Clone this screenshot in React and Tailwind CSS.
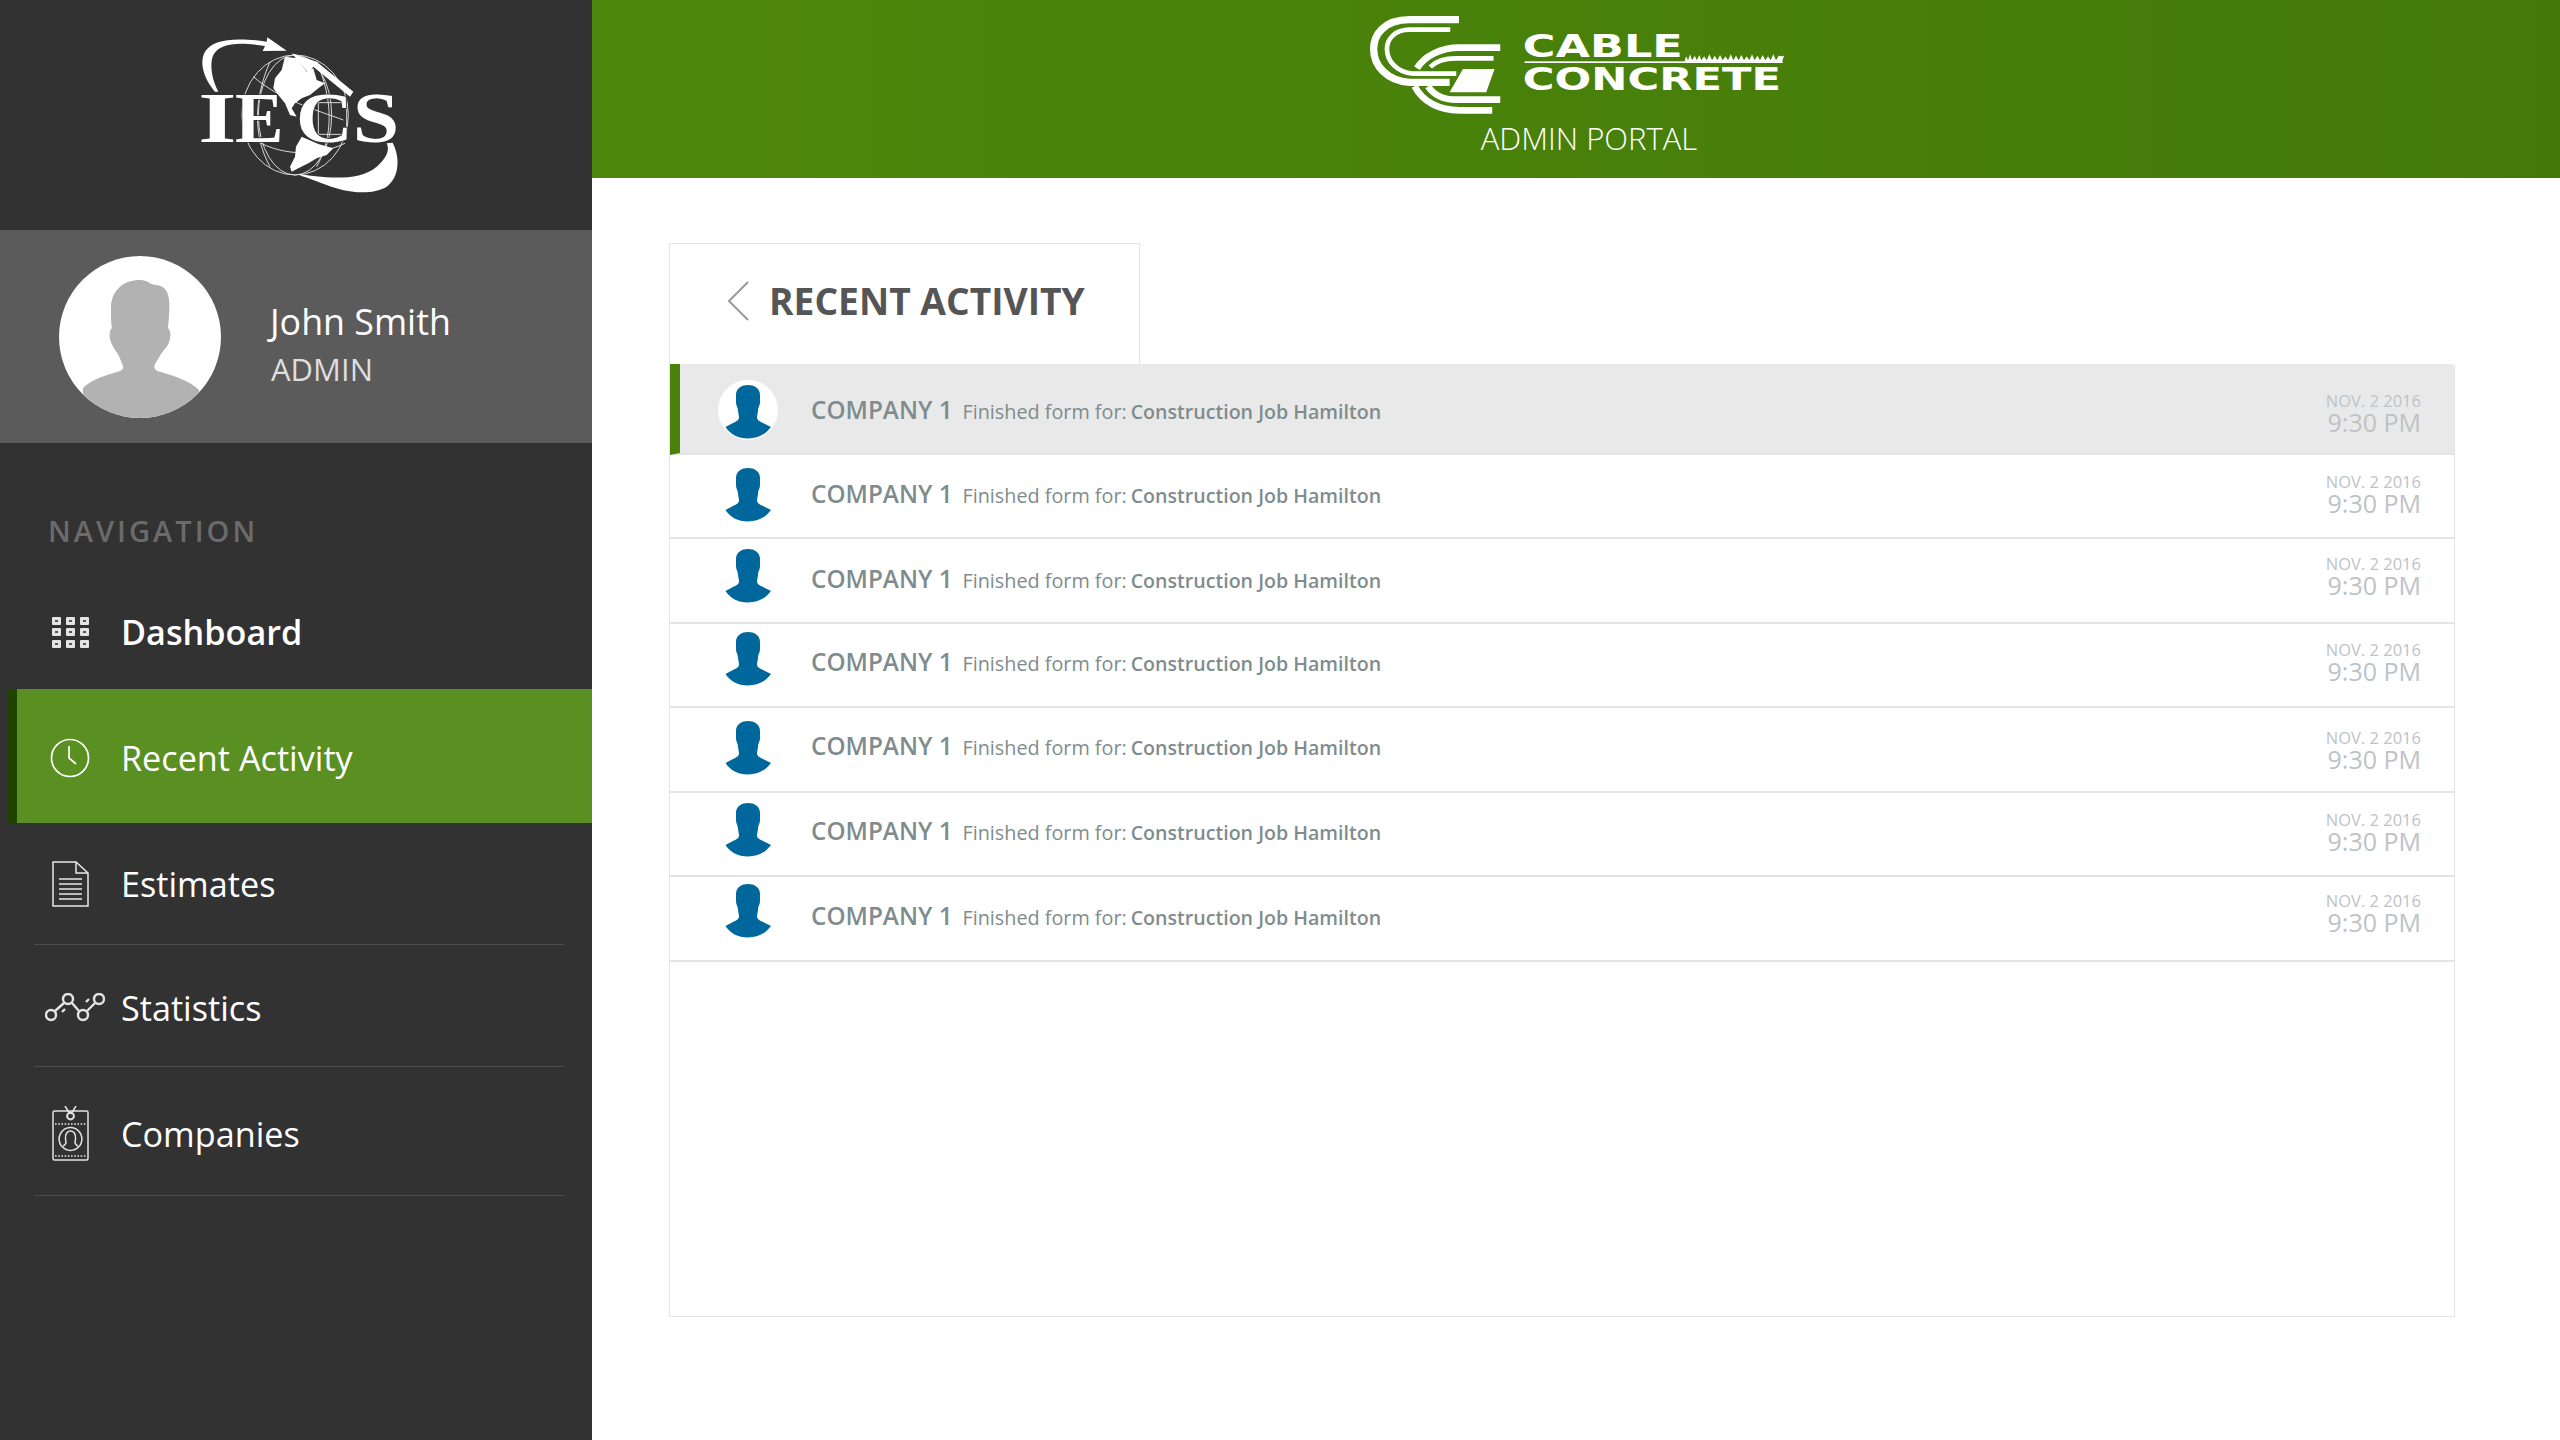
import { useState } from "react";

const logoLetter = {
    fill: "#ffffff",
    stroke: "#323232",
    strokeWidth: 5,
    paintOrder: "stroke",
    fontFamily: "'Liberation Serif', serif",
    fontWeight: 700,
    fontSize: 218,
};

function IecsLogo() {
    return (
        <svg viewBox="0 0 780 570" className="w-[260px] h-[190px] ml-[8px]">
            <g fill="none" stroke="#d8d8d8" strokeWidth="3">
                <ellipse cx="375" cy="285" rx="160" ry="180" />
                <ellipse cx="375" cy="285" rx="110" ry="180" />
                <path d="M250 170 C 330 240 440 270 520 300" />
                <path d="M225 340 C 300 400 420 420 525 370" />
                <path d="M300 125 C 250 240 250 350 300 440" />
                <path d="M440 125 C 490 240 490 350 440 440" />
                <rect x="445" y="248" width="85" height="95" />
            </g>
            <g fill="#ffffff">
                <path d="M345 110 L380 115 L410 155 L430 145 L440 180 L465 190 L445 205 L420 225 L395 235 L375 250 L365 265 L380 290 L360 285 L345 250 L325 225 L310 205 L315 175 L335 150 Z" />
                <path d="M395 350 L445 372 L490 385 L470 405 L440 415 L415 430 L385 445 L365 455 L360 440 L375 410 L378 380 Z" />
                <path d="M135 215 C105 180 85 130 105 95 C125 60 190 50 290 65 L292 52 L350 92 L278 93 L285 78 C200 65 150 70 130 105 C118 130 125 180 145 215 Z" />
                <path d="M380 462 C450 470 560 490 620 440 C650 415 660 390 650 370 L668 368 C690 410 690 470 650 500 C600 530 520 515 470 495 C430 480 400 470 380 462 Z" />
                <path d="M365 100 L440 125 L550 215 L540 230 L430 140 L415 160 Z" />
            </g>
            <text transform="translate(85 365) scale(1.35 1)" style={logoLetter}>I</text>
            <text transform="translate(195 365)" style={logoLetter}>E</text>
            <text transform="translate(378 365) scale(1.08 1)" style={logoLetter}>C</text>
            <text transform="translate(548 365) scale(1.15 1)" style={logoLetter}>S</text>
        </svg>
    );
}

function CableLogo() {
    return (
        <svg viewBox="0 0 1300 300" className="w-[433px] h-[100px] ml-[6px]">
            <g fill="none" stroke="#ffffff" transform="translate(-190 -48)">
                <path d="M478 62 H330 C250 62 222 110 222 150 C222 200 262 246 330 250 H450" strokeWidth="22" />
                <path d="M452 92 H330 C285 92 262 120 262 150 C262 185 290 220 340 224 H470" strokeWidth="14" />
                <path d="M602 146 H480 C425 146 375 170 352 208" strokeWidth="20" />
                <path d="M582 178 H470 C430 178 405 190 392 204" strokeWidth="14" />
                <path d="M345 262 C370 310 420 334 480 334 H578" strokeWidth="20" />
                <path d="M385 262 C405 290 430 302 470 302 H602" strokeWidth="20" />
            </g>
            <g transform="translate(-190 -48)">
                <path d="M490 210 H585 L560 280 H450 Z" fill="#ffffff" />
                <rect x="675" y="187" width="775" height="5" fill="#ffffff" />
                <path
                    d="M1155 188 L1160 172 L1166 184 L1172 166 L1178 184 L1186 170 L1192 184 L1200 168 L1206 184 L1214 172 L1222 184 L1230 166 L1238 184 L1246 170 L1254 184 L1262 168 L1270 184 L1278 172 L1286 184 L1294 166 L1302 184 L1310 170 L1318 184 L1326 168 L1334 184 L1342 172 L1350 184 L1358 166 L1366 184 L1374 170 L1382 184 L1390 168 L1398 184 L1406 172 L1414 184 L1422 166 L1430 184 L1438 170 L1446 172 L1454 170 L1448 188 Z"
                    fill="#ffffff"
                />
                <text x="670" y="175" fill="#ffffff" fontFamily="'DejaVu Sans', sans-serif" fontWeight="700" fontSize="96" textLength="480" lengthAdjust="spacingAndGlyphs">
                    CABLE
                </text>
                <text x="670" y="272" fill="#ffffff" fontFamily="'DejaVu Sans', sans-serif" fontWeight="700" fontSize="96" textLength="775" lengthAdjust="spacingAndGlyphs">
                    CONCRETE
                </text>
            </g>
        </svg>
    );
}

function DashboardIcon() {
    const cells = [0, 1, 2, 3, 4, 5, 6, 7, 8];
    return (
        <div className="grid grid-cols-3 gap-x-[5px] gap-y-[3.5px] w-[37px] ml-[7px]">
            {cells.map((cell) => (
                <div key={cell} className="h-[8px] w-[9px] rounded-[1px] bg-[#e4e4e4] flex items-center justify-center">
                    <div className="h-[2px] w-[3px] bg-[#555555]" />
                </div>
            ))}
        </div>
    );
}

function ClockIcon() {
    return (
        <svg viewBox="0 0 40 40" className="w-[40px] h-[40px] ml-[5px]" fill="none" stroke="#ffffff" strokeWidth="1.7">
            <circle cx="20" cy="20" r="18.5" />
            <path d="M19 8 V20 L26 26" />
        </svg>
    );
}

function DocIcon() {
    return (
        <svg viewBox="0 0 37 46" className="w-[37px] h-[46px] ml-[7px]" fill="none" stroke="#e8e8e8" strokeWidth="1.5">
            <path d="M1 1 H24 L36 12 V45 H1 Z" />
            <path d="M24 1 V12 H36" />
            <path d="M7 18 H30 M7 23 H30 M7 28 H30 M7 33 H30 M7 38 H30" />
        </svg>
    );
}

function StatsIcon() {
    return (
        <svg viewBox="0 0 60 30" className="w-[60px] h-[30px]" fill="none" stroke="#e4e4e4" strokeWidth="2.4">
            <circle cx="6" cy="22" r="5" />
            <circle cx="23" cy="6" r="5" />
            <circle cx="38" cy="22" r="5" />
            <circle cx="54" cy="6" r="5" />
            <path d="M10 18 L19 10 M27 10 L34 18 M42 18 L50 10" />
            <path d="M17 19 L20 16 M41 9 L44 6" />
        </svg>
    );
}

function BadgeIcon() {
    return (
        <svg viewBox="0 0 37 55" className="w-[37px] h-[55px] ml-[7px]" fill="none" stroke="#e4e4e4" strokeWidth="1.5">
            <rect x="1" y="5" width="35" height="49" rx="1.5" />
            <path d="M13 0 L18 8 M24 0 L19 8" />
            <circle cx="18.5" cy="10" r="3.4" strokeWidth="2" />
            <path d="M3 18 H34 M3 50 H34" strokeDasharray="1.6 1.6" />
            <circle cx="18.5" cy="33" r="11.4" />
            <path d="M11 40 C15 38 14 36 13.5 33 C13 27 16 25 18.5 25 C21 25 24 27 23.5 33 C23 36 22 38 26 40" />
        </svg>
    );
}

const navItems = [
    { label: "Dashboard", icon: <DashboardIcon />, rowClass: "h-[114px] font-semibold" },
    { label: "Recent Activity", icon: <ClockIcon />, active: true, rowClass: "h-[134px] pt-[3px]" },
    { label: "Estimates", icon: <DocIcon />, rowClass: "h-[122px] border-b border-[#4d4d4d]" },
    { label: "Statistics", icon: <StatsIcon />, rowClass: "h-[122px] pt-[5px] border-b border-[#4d4d4d]" },
    { label: "Companies", icon: <BadgeIcon />, rowClass: "h-[129px] pt-[5px] border-b border-[#4d4d4d]" },
];

function NavItem({ item }) {
    if (item.active) {
        return (
            <div className={`flex items-center ml-[7px] border-l-[10px] border-[#204400] bg-[#5a8f21] pl-[28px] text-white ${item.rowClass}`}>
                <div className="w-[60px] flex">{item.icon}</div>
                <span className="ml-[16px]">{item.label}</span>
            </div>
        );
    }
    return (
        <div className={`flex items-center ml-[34px] mr-[28px] pl-[11px] text-white ${item.rowClass}`}>
            <div className="w-[60px] flex">{item.icon}</div>
            <span className="ml-[16px]">{item.label}</span>
        </div>
    );
}

function Sidebar() {
    return (
        <aside className="w-[592px] shrink-0 min-h-[1440px] bg-[#323232]">
            <div className="h-[230px] flex items-center justify-center">
                <IecsLogo />
            </div>
            <div className="h-[213px] bg-[#5b5b5b] flex items-center pl-[59px]">
                <div className="w-[162px] h-[162px] rounded-full bg-white overflow-hidden">
                    <svg viewBox="0 0 162 162" className="w-full h-full">
                        <path
                            d="M81 24 C65 24 52 34 52 52 C52 62 52 68 53 72 C50 74 50 82 52 86 C54 92 58 96 60 100 L64 110 C65 113 62 115 58 116 C44 120 32 124 24 132 L24 170 L140 170 L140 134 C130 124 114 120 102 116 C97 115 94 113 96 108 L102 98 C106 92 110 90 111 82 C112 78 111 74 109 72 C110 60 112 44 108 36 C104 28 98 30 92 28 C88 25 85 24 81 24 Z"
                            fill="#b2b2b2"
                        />
                    </svg>
                </div>
                <div className="ml-[49px] mt-[16px]">
                    <p className="text-[35.8px] leading-[50px] font-medium text-white">John Smith</p>
                    <p className="ml-[1px] text-[31px] leading-[47px] text-[#dedede]">ADMIN</p>
                </div>
            </div>
            <p className="mt-[68px] ml-[48px] text-[29px] leading-[40px] font-semibold tracking-[0.105em] text-[#6b6b6b]">NAVIGATION</p>
            <nav className="mt-[24px] text-[34.2px]">
                {navItems.map((item) => (
                    <NavItem key={item.label} item={item} />
                ))}
            </nav>
        </aside>
    );
}

function PersonIcon({ highlighted }) {
    return (
        <svg viewBox="0 0 60 60" className="w-[60px] h-[60px]">
            {highlighted && <ellipse cx="30" cy="30" rx="30" ry="30" fill="#ffffff" />}
            <path
                d="M30 5 C24 5 18 8 18 15 V22 C18 26 20 27 20 31 L21 37 C21 40 19 41 15 43 L7.5 47 C12 54 20 58.5 30 58.5 C40 58.5 48 54 53 47 L45 43 C41 41 39 40 39 37 L40 31 C40 27 42 26 42 22 V15 C42 8 36 5 30 5 Z"
                fill="#00679c"
            />
        </svg>
    );
}

// the rows of the reference aren't quite evenly spaced inside
const activityRows = [
    { id: 1, avatar: "mt-[4px]", text: "mt-[4px]", time: "mt-[10px]" },
    { id: 2, avatar: "mb-[6px]", text: "mb-[4px]", time: "mb-[3px]" },
    { id: 3, avatar: "mb-[12px]", text: "mb-[3px]", time: "mb-[8px]" },
    { id: 4, avatar: "mb-[16px]", text: "mb-[5px]", time: "mb-[5px]" },
    { id: 5, avatar: "mb-[6px]", text: "mb-[6px]", time: "mt-[3px]" },
    { id: 6, avatar: "mb-[12px]", text: "mb-[5px]", time: "mb-[3px]" },
    { id: 7, avatar: "mb-[18px]", text: "mb-[5px]", time: "mb-[10px]" },
];

function ActivityRow({ row }) {
    const highlighted = row.id === 1;
    return (
        <div
            className={`flex items-center border-b-2 border-[#e3e5e5] pr-[33px] ${
                highlighted ? "h-[90.5px] bg-[#e9e9e9] rounded-tr-[4px] border-l-[10px] border-l-[#4a8209] pl-[38px]" : "h-[84.5px] pl-[48px]"
            }`}
        >
            <div className={row.avatar}>
                <PersonIcon highlighted={highlighted} />
            </div>
            <div className={`flex items-baseline ml-[33px] text-[#7f8c8d] ${row.text}`}>
                <span className="text-[24.3px] font-semibold">COMPANY 1</span>
                <span className="ml-[10px] text-[19.8px]">Finished form for:</span>
                <span className="ml-[4px] text-[19.6px] font-semibold">Construction Job Hamilton</span>
            </div>
            <div className={`ml-auto text-right text-[#bdc3c7] ${row.time}`}>
                <p className="text-[16.5px] leading-[17px]">NOV. 2 2016</p>
                <p className="text-[25px] leading-[26px] font-medium">9:30 PM</p>
            </div>
        </div>
    );
}

export default function App() {
    const [rows] = useState(activityRows);

    return (
        <div className="flex min-h-[1440px] bg-white font-['Open_Sans',sans-serif]">
            <Sidebar />
            <main className="flex-1">
                <header className="h-[178px] bg-gradient-to-r from-[#4d870b] to-[#437a09] flex flex-col items-center pt-[15px]">
                    <CableLogo />
                    <p className="ml-[26px] mt-[2px] text-[31px] leading-[42px] font-light text-white">ADMIN PORTAL</p>
                </header>
                <section className="ml-[77px] mr-[105px] mt-[65px]">
                    <div className="w-[471px] h-[121px] border border-b-0 border-[#e3e5e5] flex items-center pl-[57px] pb-[7px]">
                        <svg viewBox="0 0 22 40" className="w-[22px] h-[40px]" fill="none" stroke="#9a9a9a" strokeWidth="2">
                            <path d="M21 1 L2 20 L21 39" />
                        </svg>
                        <h1 className="ml-[20px] text-[37.2px] font-bold text-[#555555]">RECENT ACTIVITY</h1>
                    </div>
                    <div className="h-[953px] border border-t-0 border-[#e3e5e5]">
                        {rows.map((row) => (
                            <ActivityRow key={row.id} row={row} />
                        ))}
                    </div>
                </section>
            </main>
        </div>
    );
}
